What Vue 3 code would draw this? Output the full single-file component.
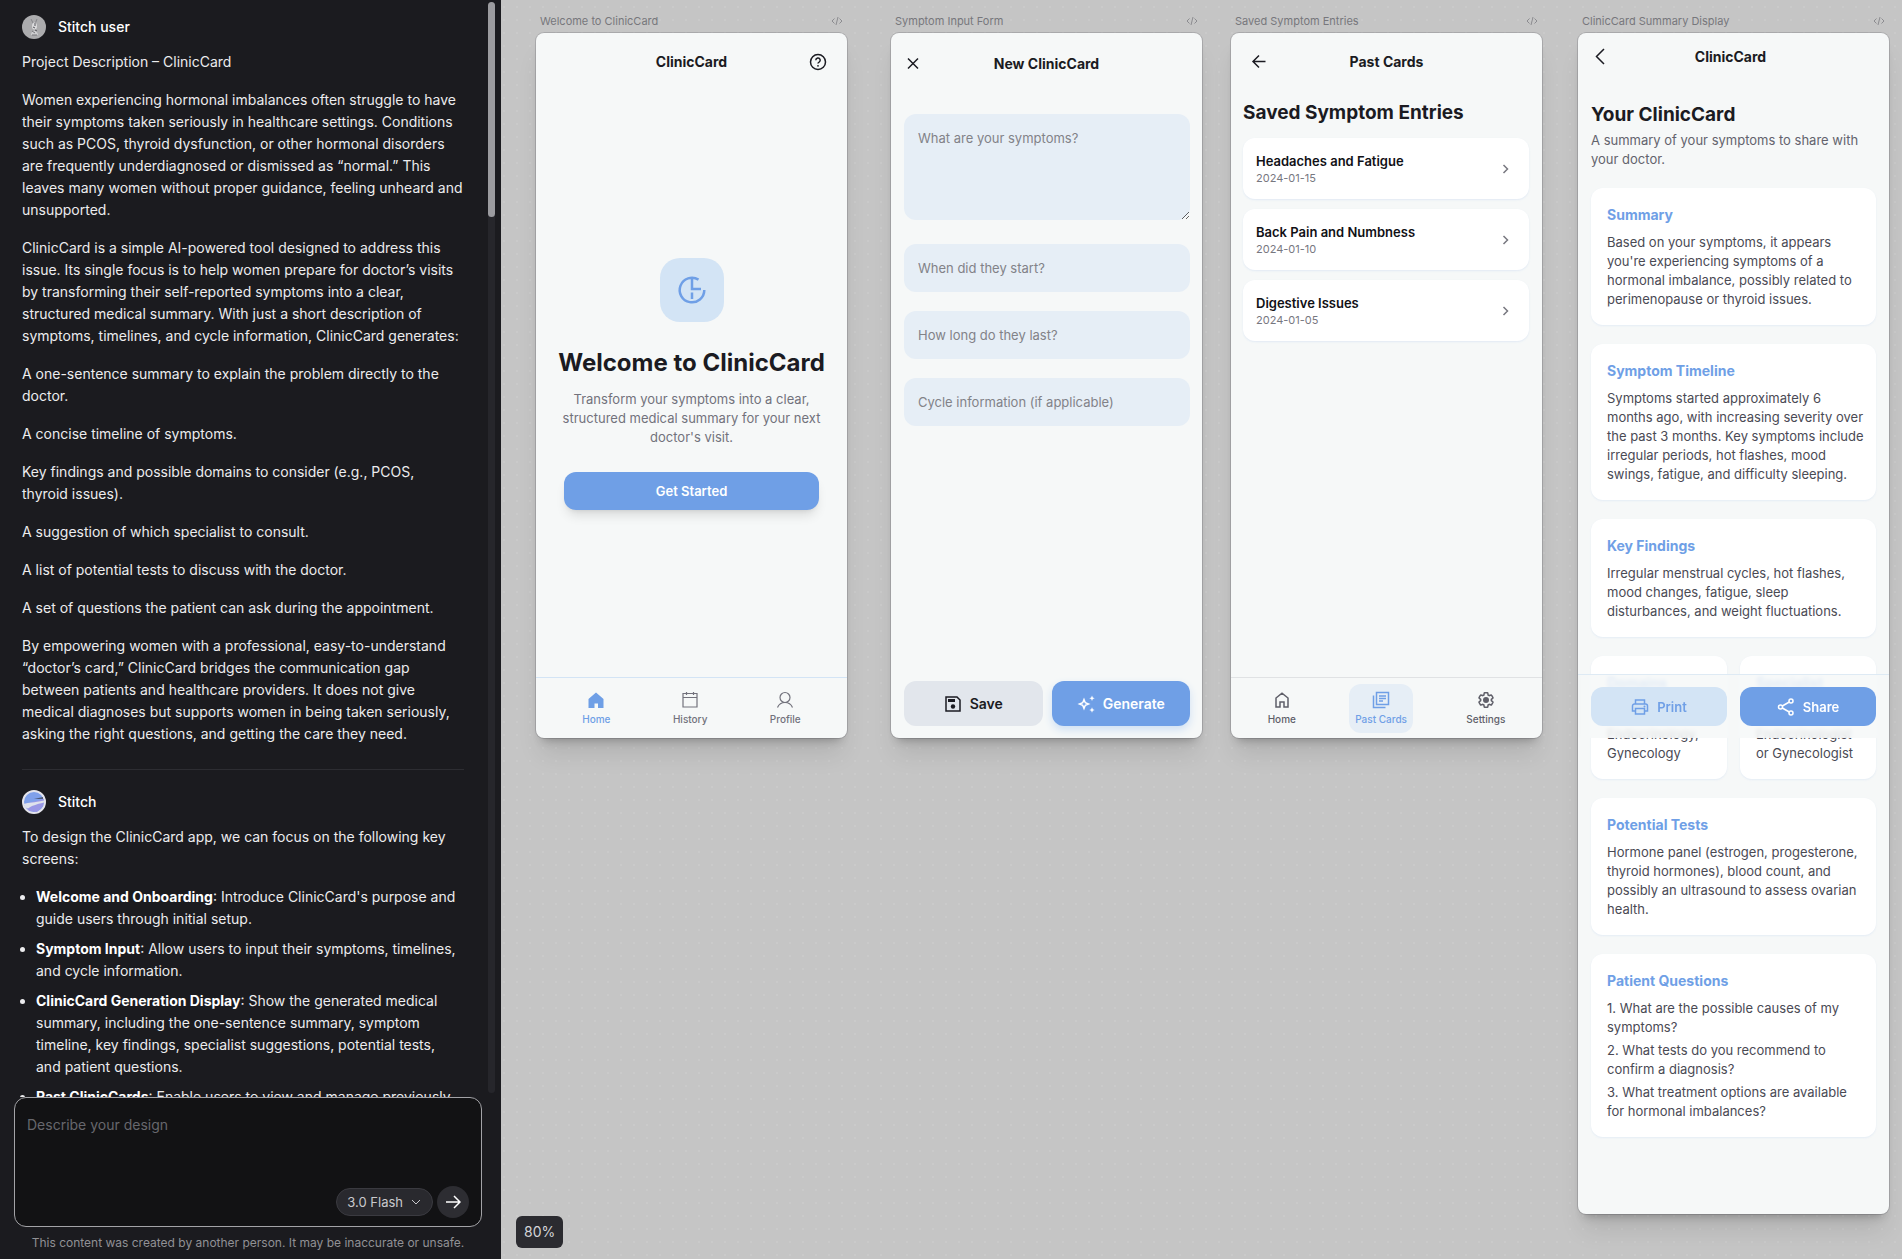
<!-- src/App.vue -->
<template>
  <div class="app">
    <aside class="sidebar">
      <div class="chat-area">
        <div class="messages">
          <div class="author">
            <svg class="avatar" viewBox="0 0 24 24">
              <circle cx="12" cy="12" r="12" fill="#acacae" />
              <path d="M9 4l3 6M15 4l-2 5" stroke="#86868a" stroke-width="1" />
              <ellipse cx="12.5" cy="11" rx="2.5" ry="3.5" fill="#dcdcde" />
              <path d="M13 8v3M11 12l2 1M13 15l2 1" stroke="#55555a" stroke-width="1" />
              <path d="M9 20c0-5 6-6 7 0z" fill="#d0d0d2" />
              <path d="M10 16l3 2M10 20h5" stroke="#77777b" stroke-width="1" />
            </svg>
            <span>Stitch user</span>
          </div>
          <p v-for="(text, index) in description" :key="index">{{ text }}</p>
          <hr />
          <div class="author">
            <svg class="avatar" viewBox="0 0 24 24">
              <circle cx="12" cy="12" r="11" fill="#7fa0ea" stroke="#e4e4ec" stroke-width="2" />
              <path d="M2 14l20-5-1 7-6 6-8-1z" fill="#9a97e6" />
              <path d="M1.5 14c6-2 10-1 20.5-3.5v2c-8 2-12 3-16 6l-2.5-1z" fill="#dfe2ec" />
              <path d="M12 9l9-2v2z" fill="#4c5878" />
            </svg>
            <span>Stitch</span>
          </div>
          <p>To design the ClinicCard app, we can focus on the following key screens:</p>
          <ul>
            <li v-for="item in plan" :key="item.title"><strong>{{ item.title }}</strong>: {{ item.text }}</li>
          </ul>
        </div>
        <div class="scroll-track"><div class="scroll-thumb"></div></div>
      </div>

      <form class="composer" @submit.prevent>
        <textarea v-model="prompt" placeholder="Describe your design" aria-label="Describe your design"></textarea>
        <div class="composer-actions">
          <button type="button" class="model">
            3.0 Flash
            <svg width="10" height="10" viewBox="0 0 10 10"><path d="M1 3l4 4 4-4" /></svg>
          </button>
          <button type="submit" class="send" aria-label="Send">
            <svg width="16" height="16" viewBox="0 0 16 16"><path d="M1 8h14M9 2l6 6-6 6" /></svg>
          </button>
        </div>
      </form>
      <p class="disclaimer">This content was created by another person. It may be inaccurate or unsafe.</p>
    </aside>

    <main class="canvas">
      <section v-for="board in boards" :key="board.id" class="board" :style="{ left: board.x + 'px' }">
        <div class="board-label">
          <span>{{ board.name }}</span>
          <svg width="12" height="10" viewBox="0 0 12 10"><path d="M3.5 2.5L1 5l2.5 2.5M8.5 2.5L11 5 8.500 7.500M7 1L5 9" /></svg>
        </div>

        <!-- Welcome -->
        <div v-if="board.id === 'welcome'" class="phone">
          <header class="bar">
            <span></span>
            <h2>ClinicCard</h2>
            <button class="icon-btn end" aria-label="Help">
              <svg width="18" height="18" viewBox="0 0 18 18">
                <circle cx="9" cy="9" r="7.5" />
                <path d="M6.8 7.200a2.200 2.200 0 1 1 3.300 1.900c-.8.4-1.100.8-1.100 1.400" />
                <circle cx="9" cy="12.800" r=".9" class="solid" />
              </svg>
            </button>
          </header>
          <div class="hero">
            <div class="logo">
              <svg width="32" height="32" viewBox="0 0 32 32">
                <path d="M22.5 5.600A12.300 12.300 0 1 0 28.300 16M16 4v11h9M16 18.5v6.500" />
              </svg>
            </div>
            <h1>Welcome to ClinicCard</h1>
            <p>Transform your symptoms into a clear, structured medical summary for your next doctor's visit.</p>
            <button class="btn primary start">Get Started</button>
          </div>
          <nav class="tabs welcome-tabs">
            <a href="#" class="active">
              <svg width="18" height="18" viewBox="0 0 18 18"><path class="solid" d="M9 1.500l7.500 6.500v9h-5.500v-4.500H7.500V17H1.500V8z" /></svg>
              Home
            </a>
            <a href="#">
              <svg width="18" height="18" viewBox="0 0 18 18"><path d="M2 2.500h14V16H2zM2 6.500h14M5.500 1v3M12.500 1v3" /></svg>
              History
            </a>
            <a href="#">
              <svg width="18" height="18" viewBox="0 0 18 18"><circle cx="9" cy="6.500" r="5" /><path d="M1.500 16.500C3 13 6 11.500 9 11.500s6 1.500 7.500 5" /></svg>
              Profile
            </a>
          </nav>
        </div>

        <!-- Symptom form -->
        <div v-else-if="board.id === 'form'" class="phone">
          <header class="bar form-bar">
            <button class="icon-btn" aria-label="Close">
              <svg width="18" height="18" viewBox="0 0 18 18"><path d="M4 3.500l10 10M14 3.500l-10 10" /></svg>
            </button>
            <h2>New ClinicCard</h2>
          </header>
          <div class="fields">
            <textarea placeholder="What are your symptoms?" aria-label="What are your symptoms?"></textarea>
            <input v-for="field in fields" :key="field" type="text" :placeholder="field" :aria-label="field" />
          </div>
          <div class="form-actions">
            <button class="btn muted">
              <svg width="18" height="18" viewBox="0 0 18 18">
                <path d="M2 2h11l3 3v11H2z" />
                <path class="solid" d="M4 4h7v3H4z" />
                <circle class="solid" cx="9" cy="11.500" r="2.200" />
              </svg>
              Save
            </button>
            <button class="btn primary glow">
              <svg width="18" height="18" viewBox="0 0 18 18">
                <path d="M7 4.500L8.300 7.700 11.500 9 8.300 10.300 7 13.500 5.700 10.300 2.500 9l3.200-1.300z" />
                <path class="solid" d="M15 .5l.8 1.900 1.900.8-1.900.8-.8 1.900-.8-1.900-1.900-.8 1.900-.8zM15 12.300l.8 1.900 1.900.8-1.900.8-.8 1.900-.8-1.900-1.900-.8 1.900-.8z" />
              </svg>
              Generate
            </button>
          </div>
        </div>

        <!-- Past cards -->
        <div v-else-if="board.id === 'past'" class="phone">
          <header class="bar past-bar">
            <button class="icon-btn" aria-label="Back">
              <svg width="18" height="18" viewBox="0 0 18 18"><path d="M15.500 8.500H3.500M9 2.500l-6 6 6 6" /></svg>
            </button>
            <h2>Past Cards</h2>
          </header>
          <h3 class="page-title">Saved Symptom Entries</h3>
          <div class="entries">
            <a v-for="entry in entries" :key="entry.date" href="#" class="entry">
              <span>
                <b>{{ entry.title }}</b>
                <time>{{ entry.date }}</time>
              </span>
              <svg width="12" height="12" viewBox="0 0 12 12"><path d="M3.500 2l4 4-4 4" /></svg>
            </a>
          </div>
          <nav class="tabs past-tabs">
            <a href="#">
              <svg width="18" height="18" viewBox="0 0 18 18"><path d="M3 7l6-4.800L15 7v9h-4v-5H7v5H3z" /></svg>
              Home
            </a>
            <a href="#" class="active">
              <svg width="18" height="18" viewBox="0 0 18 18"><path d="M4.500 1.500h12v12h-12zM1.500 4.500v12h12M7 5h7M7 7.500h7M7 10h4" /></svg>
              Past Cards
            </a>
            <a href="#">
              <svg width="18" height="18" viewBox="0 0 24 24" class="gear">
                <path d="M19.14 12.94c.04-.3.06-.61.06-.94 0-.32-.02-.64-.07-.94l2.03-1.58c.18-.14.23-.41.12-.61l-1.92-3.32c-.12-.22-.37-.29-.59-.22l-2.39.96c-.5-.38-1.03-.7-1.62-.94l-.36-2.54c-.04-.24-.24-.41-.48-.41h-3.84c-.24 0-.43.17-.47.41l-.36 2.54c-.59.24-1.13.57-1.62.94l-2.39-.96c-.22-.08-.47 0-.59.22L2.74 8.87c-.12.21-.08.47.12.61l2.03 1.58c-.05.3-.09.63-.09.94s.02.64.07.94l-2.03 1.58c-.18.14-.23.41-.12.61l1.92 3.32c.12.22.37.29.59.22l2.39-.96c.5.38 1.03.7 1.62.94l.36 2.54c.05.24.24.41.48.41h3.84c.24 0 .44-.17.47-.41l.36-2.54c.59-.24 1.13-.56 1.62-.94l2.39.96c.22.08.47 0 .59-.22l1.92-3.32c.12-.22.07-.47-.12-.61z" />
                <circle class="solid" cx="12" cy="12" r="4" />
              </svg>
              Settings
            </a>
          </nav>
        </div>

        <!-- Summary -->
        <div v-else class="phone">
          <header class="bar summary-bar">
            <button class="icon-btn" aria-label="Back">
              <svg width="18" height="18" viewBox="0 0 18 18"><path d="M13 1L5.500 8.500 13 16" /></svg>
            </button>
            <h2>ClinicCard</h2>
          </header>
          <div class="summary">
            <h3 class="page-title">Your ClinicCard</h3>
            <p class="lead">A summary of your symptoms to share with your doctor.</p>
            <div class="cards">
              <article v-for="card in cards" :key="card.title" class="card" :class="{ half: card.half }">
                <h4>{{ card.title }}</h4>
                <p v-for="line in card.lines" :key="line">{{ line }}</p>
              </article>
            </div>
          </div>
          <div class="share-bar">
            <button class="btn soft">
              <svg width="18" height="18" viewBox="0 0 18 18">
                <path d="M4.500 6V2h9v4M4.500 13H1.500V8a2 2 0 0 1 2-2h11a2 2 0 0 1 2 2v5h-3M4.500 10.500h9V16h-9z" />
                <circle class="solid" cx="13.500" cy="8.500" r="1" />
              </svg>
              Print
            </button>
            <button class="btn primary">
              <svg width="18" height="18" viewBox="0 0 18 18">
                <circle cx="3.500" cy="9" r="2" /><circle cx="14" cy="3" r="2" /><circle cx="14" cy="15" r="2" />
                <path d="M5.300 8l7-4M5.300 10l7 4" />
              </svg>
              Share
            </button>
          </div>
        </div>
      </section>

      <div class="zoom-level">80%</div>
    </main>
  </div>
</template>

<script setup>
import { ref } from 'vue'

const prompt = ref('')

const description = [
  'Project Description – ClinicCard',
  'Women experiencing hormonal imbalances often struggle to have their symptoms taken seriously in healthcare settings. Conditions such as PCOS, thyroid dysfunction, or other hormonal disorders are frequently underdiagnosed or dismissed as “normal.” This leaves many women without proper guidance, feeling unheard and unsupported.',
  'ClinicCard is a simple AI-powered tool designed to address this issue. Its single focus is to help women prepare for doctor’s visits by transforming their self-reported symptoms into a clear, structured medical summary. With just a short description of symptoms, timelines, and cycle information, ClinicCard generates:',
  'A one-sentence summary to explain the problem directly to the doctor.',
  'A concise timeline of symptoms.',
  'Key findings and possible domains to consider (e.g., PCOS, thyroid issues).',
  'A suggestion of which specialist to consult.',
  'A list of potential tests to discuss with the doctor.',
  'A set of questions the patient can ask during the appointment.',
  'By empowering women with a professional, easy-to-understand “doctor’s card,” ClinicCard bridges the communication gap between patients and healthcare providers. It does not give medical diagnoses but supports women in being taken seriously, asking the right questions, and getting the care they need.'
]

const plan = [
  { title: 'Welcome and Onboarding', text: "Introduce ClinicCard's purpose and guide users through initial setup." },
  { title: 'Symptom Input', text: 'Allow users to input their symptoms, timelines, and cycle information.' },
  { title: 'ClinicCard Generation Display', text: 'Show the generated medical summary, including the one-sentence summary, symptom timeline, key findings, specialist suggestions, potential tests, and patient questions.' },
  { title: 'Past ClinicCards', text: 'Enable users to view and manage previously generated cards.' }
]

// x is the board's place on the canvas
const boards = [
  { id: 'welcome', name: 'Welcome to ClinicCard', x: 35 },
  { id: 'form', name: 'Symptom Input Form', x: 390 },
  { id: 'past', name: 'Saved Symptom Entries', x: 730 },
  { id: 'summary', name: 'ClinicCard Summary Display', x: 1077 }
]

const fields = ['When did they start?', 'How long do they last?', 'Cycle information (if applicable)']

const entries = [
  { title: 'Headaches and Fatigue', date: '2024-01-15' },
  { title: 'Back Pain and Numbness', date: '2024-01-10' },
  { title: 'Digestive Issues', date: '2024-01-05' }
]

const cards = [
  { title: 'Summary', lines: ["Based on your symptoms, it appears you're experiencing symptoms of a hormonal imbalance, possibly related to perimenopause or thyroid issues."] },
  { title: 'Symptom Timeline', lines: ['Symptoms started approximately 6 months ago, with increasing severity over the past 3 months. Key symptoms include irregular periods, hot flashes, mood swings, fatigue, and difficulty sleeping.'] },
  { title: 'Key Findings', lines: ['Irregular menstrual cycles, hot flashes, mood changes, fatigue, sleep disturbances, and weight fluctuations.'] },
  { title: 'Domains', half: true, lines: ['PCOS, Endocrinology, Gynecology'] },
  { title: 'Specialist', half: true, lines: ['Consult an Endocrinologist or Gynecologist'] },
  { title: 'Potential Tests', lines: ['Hormone panel (estrogen, progesterone, thyroid hormones), blood count, and possibly an ultrasound to assess ovarian health.'] },
  {
    title: 'Patient Questions',
    lines: [
      '1. What are the possible causes of my symptoms?',
      '2. What tests do you recommend to confirm a diagnosis?',
      '3. What treatment options are available for hormonal imbalances?'
    ]
  }
]
</script>

<style>
body {
  margin: 0;
  background: #c5c5c5;
}
</style>

<style scoped>
* {
  box-sizing: border-box;
}

.app {
  display: flex;
  height: 100vh;
  font-family: Inter, "Liberation Sans", sans-serif;
  overflow: hidden;
}

h1, h2, h3, h4, p, ul {
  margin: 0;
}

button, input, textarea {
  font-family: inherit;
  border: 0;
  outline: 0;
}

a {
  color: inherit;
  text-decoration: none;
}

svg {
  flex: none;
  fill: none;
  stroke: currentColor;
  stroke-width: 1.5;
}

.solid {
  fill: currentColor;
  stroke: none;
}

/* sidebar */
.sidebar {
  flex: none;
  width: 501px;
  display: flex;
  flex-direction: column;
  background: #1b1b1f;
  color: #ececee;
  font-size: 14px;
  line-height: 22px;
}

.chat-area {
  flex: 1;
  min-height: 0;
  display: flex;
  justify-content: space-between;
  padding: 0 6px 0 10px;
}

.messages {
  width: 454px;
  padding: 15px 0 0 12px;
  overflow: hidden;
}

.author {
  display: flex;
  align-items: center;
  gap: 12px;
  margin-bottom: 12px;
  height: 24px;
  font-weight: 500;
  color: #fff;
}

.avatar {
  width: 24px;
  height: 24px;
  stroke: none;
}

.messages p {
  margin-bottom: 16px;
}

hr {
  margin: 24px 0 20px;
  border: 0;
  border-top: 1px solid #2d2d32;
}

ul {
  padding: 0 4px 0 14px;
}

li {
  margin-bottom: 8px;
}

strong {
  font-weight: 700;
  color: #fff;
}

.scroll-track {
  width: 7px;
  margin: 2px 0 4px;
  border-radius: 4px;
  background: #26262b;
}

.scroll-thumb {
  height: 215px;
  border-radius: 4px;
  background: #9b9b9f;
}

.composer {
  height: 130px;
  margin: 0 19px 0 14px;
  padding: 16px 12px 8px;
  display: flex;
  flex-direction: column;
  border: 1px solid #a3a3a7;
  border-radius: 12px;
  background: #121214;
}

.composer textarea {
  flex: 1;
  padding: 0;
  resize: none;
  background: transparent;
  color: #ececee;
  font-size: 14px;
  line-height: 22px;
}

.composer textarea::placeholder {
  color: #67676d;
}

.composer-actions {
  display: flex;
  justify-content: flex-end;
  align-items: center;
  gap: 4px;
}

.model {
  display: flex;
  align-items: center;
  gap: 8px;
  height: 28px;
  padding: 0 11px 0 10px;
  border: 1px solid #3a3a40;
  border-radius: 14px;
  background: #29292e;
  color: #c9c9cd;
  font-size: 13px;
}

.model svg {
  stroke-width: 1;
}

.send {
  display: flex;
  align-items: center;
  justify-content: center;
  width: 32px;
  height: 32px;
  padding: 0;
  border-radius: 16px;
  background: #2d2d32;
  color: #fff;
}

.disclaimer {
  padding: 8px 5px 8px 0;
  font-size: 12px;
  line-height: 16px;
  text-align: center;
  color: #919195;
}

/* canvas */
.canvas {
  position: relative;
  flex: 1;
  min-width: 0;
  overflow: hidden;
  background: radial-gradient(circle at 3px 7px, #cacaca 1px, transparent 1px) 0 0 / 13px 13px #c5c5c5;
}

.board {
  position: absolute;
  top: 9px;
  width: 311px;
}

.board-label {
  display: flex;
  align-items: center;
  justify-content: space-between;
  padding: 0 4px;
  height: 24px;
  font-size: 11px;
  color: #77777c;
}

.board-label svg {
  color: #8c8c90;
  stroke-width: 1;
}

.phone {
  position: relative;
  display: flex;
  flex-direction: column;
  min-height: 705px;
  border-radius: 8px;
  background: #f6f8f8;
  color: #1b1b22;
  font-size: 13px;
  line-height: 19px;
  box-shadow: 0 0 0 1px rgba(60, 60, 70, 0.2), 0 20px 25px -5px rgba(0, 0, 0, 0.1), 0 8px 10px -6px rgba(0, 0, 0, 0.25);
}

.bar {
  display: grid;
  grid-template-columns: 32px 1fr 32px;
  align-items: center;
  height: 57px;
  padding: 0 13px;
}

.bar h2 {
  font-size: 14px;
  line-height: 20px;
  font-weight: 700;
  text-align: center;
}

.icon-btn {
  display: flex;
  padding: 0;
  background: none;
  color: #1b1b22;
}

.end {
  justify-content: center;
}

.form-bar {
  height: 61px;
}

.past-bar {
  padding: 0 19px;
}

.summary-bar {
  grid-template-columns: 32px 1fr 38px;
  height: 48px;
}

.hero {
  flex: 1;
  display: flex;
  flex-direction: column;
  align-items: center;
  padding: 168px 20px 0;
}

.logo {
  display: grid;
  place-items: center;
  width: 64px;
  height: 64px;
  margin-bottom: 25px;
  border-radius: 20px;
  background: #d3e4f5;
  color: #6f9fe6;
}

.logo svg {
  stroke-width: 2.5;
}

.hero h1 {
  font-size: 24px;
  line-height: 32px;
  font-weight: 700;
  white-space: nowrap;
}

.hero p {
  margin: 11px 0 25px;
  padding: 0 4px;
  text-align: center;
  color: #72727c;
}

.btn {
  display: flex;
  align-items: center;
  justify-content: center;
  gap: 8px;
  padding: 0;
  border-radius: 12px;
  font-size: 13px;
  font-weight: 600;
}

.primary {
  background: #6f9fe6;
  color: #fff;
}

.start {
  width: 255px;
  height: 38px;
  box-shadow: 0 8px 12px -3px rgba(0, 0, 0, 0.12), 0 3px 5px -3px rgba(0, 0, 0, 0.1);
}

.tabs {
  display: flex;
  margin-top: auto;
  border-top: 1px solid #d3e4f5;
  height: 61px;
  color: #72727c;
  font-size: 10px;
  line-height: 14px;
  font-weight: 500;
}

.tabs a {
  display: flex;
  flex-direction: column;
  align-items: center;
  gap: 3px;
}

.tabs .active {
  color: #6f9fe6;
}

.welcome-tabs {
  justify-content: space-around;
  padding: 13px 15px 0;
}

.welcome-tabs svg {
  stroke-width: 1.2;
}

.past-tabs {
  justify-content: space-around;
  align-items: flex-start;
  padding: 6px 7px 0;
  border-color: #e0e2e4;
  color: #5f5f69;
}

.past-tabs a {
  padding: 7px 6px;
  border-radius: 12px;
}

.past-tabs .active {
  background: #e6eef6;
}

.past-tabs .gear {
  stroke-width: 2;
}

.fields {
  display: flex;
  flex-direction: column;
  gap: 19px;
  padding: 20px 12px 0 13px;
}

.fields textarea,
.fields input {
  width: 100%;
  height: 48px;
  padding: 0 14px;
  border-radius: 12px;
  background: #e6eef6;
  font-size: 13px;
  line-height: 19px;
}

.fields textarea {
  height: 106px;
  margin-bottom: 5px;
  padding: 15px 14px;
}

.fields ::placeholder {
  color: #828288;
}

.form-actions {
  display: grid;
  grid-template-columns: 1fr 1fr;
  gap: 9px;
  margin-top: auto;
  padding: 0 12px 12px 13px;
}

.form-actions .btn {
  height: 45px;
  font-size: 14px;
}

.muted {
  background: #e2e6ec;
  color: #1b1b22;
}

.glow {
  box-shadow: 0 4px 8px #cfe0f4;
}

.page-title {
  font-size: 19px;
  line-height: 24px;
  font-weight: 700;
}

.past-bar + .page-title {
  padding: 11px 12px 13px;
}

.entries {
  display: flex;
  flex-direction: column;
  gap: 10px;
  padding: 0 13px 0 12px;
}

.entry {
  display: flex;
  align-items: center;
  justify-content: space-between;
  height: 61px;
  padding: 0 17px 0 13px;
  border-radius: 12px;
  background: #fff;
  box-shadow: 0 1px 2px rgba(111, 159, 230, 0.15);
  color: #77777f;
}

.entry b {
  display: block;
  font-weight: 600;
  line-height: 18px;
  color: #111116;
}

.entry time {
  display: block;
  font-size: 11px;
  line-height: 16px;
}

.summary {
  padding: 22px 13px 77px;
}

.lead {
  margin: 4px 0 19px;
  color: #63636d;
}

.cards {
  display: grid;
  grid-template-columns: 1fr 1fr;
  gap: 19px 13px;
}

.card {
  grid-column: span 2;
  padding: 16px 12px 16px 16px;
  border-radius: 12px;
  background: #fff;
  box-shadow: 0 1px 2px rgba(111, 159, 230, 0.12);
  color: #4a4a54;
}

.card h4 {
  margin-bottom: 7px;
  font-size: 14px;
  line-height: 22px;
  font-weight: 700;
  color: #6f9fe6;
}

.card p + p {
  margin-top: 4px;
}

.half {
  grid-column: span 1;
}

.half h4 {
  margin-bottom: 12px;
}

.share-bar {
  position: absolute;
  top: 641px;
  left: 0;
  right: 0;
  display: grid;
  grid-template-columns: 1fr 1fr;
  gap: 13px;
  padding: 12px 13px;
  border-top: 1px solid #deeaf4;
  background: rgba(246, 248, 248, 0.85);
  backdrop-filter: blur(2px);
}

.share-bar .btn {
  height: 39px;
}

.soft {
  background: #d3e4f5;
  color: #6f9fe6;
}

.zoom-level {
  position: absolute;
  left: 15px;
  bottom: 11px;
  padding: 5px 8px;
  border-radius: 6px;
  background: #2b2b30;
  color: #d4d4d8;
  font-size: 14px;
  line-height: 22px;
}
</style>
